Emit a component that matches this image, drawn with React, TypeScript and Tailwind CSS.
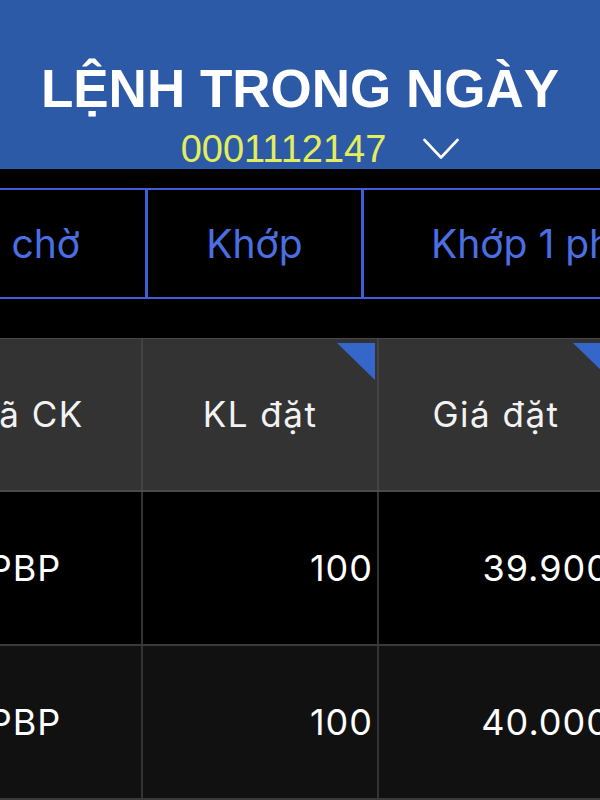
import React from 'react'

const tabText = 'font-["Inter",sans-serif] text-[39px] leading-none text-[#4b6fe3] whitespace-nowrap shrink-0'
const headText = 'font-["Inter",sans-serif] text-[35px] tracking-[1.5px] leading-none text-[#f2f2f2] whitespace-nowrap'
const cellText = 'font-["Inter",sans-serif] text-[36px] tracking-[1px] leading-none text-white whitespace-nowrap'

const rows = [
  { code: 'PBP', qty: '100', price: '39.900', bg: 'bg-black' },
  { code: 'PBP', qty: '100', price: '40.000', bg: 'bg-[#111111]' },
]

function Corner() {
  return (
    <svg className="absolute right-[2px] top-[4px]" width="38" height="37" viewBox="0 0 38 37">
      <polygon points="0,0 38,0 38,37" fill="#3566c9" />
    </svg>
  )
}

export default function App() {
  return (
    <div className="h-[800px] w-[600px] overflow-hidden bg-black">
      <header className="flex h-[169px] flex-col items-center bg-[#2d5aa7] pt-[62px]">
        <h1 className='font-["Liberation_Sans",Arial,sans-serif] text-[53px] font-bold leading-none text-white whitespace-nowrap'>
          LỆNH TRONG NGÀY
        </h1>
        <div className="mt-[15px] flex items-center gap-[37px] pl-[40px]">
          <span className='font-["Liberation_Sans",Arial,sans-serif] text-[38px] leading-none text-[#e4ee5c]'>
            0001112147
          </span>
          <svg width="36" height="22" viewBox="0 0 36 22" fill="none">
            <polyline points="1.5,2 18,19.5 34.5,2" stroke="white" strokeWidth="2.6" strokeLinecap="round" strokeLinejoin="round" />
          </svg>
        </div>
      </header>

      <nav className="mt-[19px] flex h-[111px] border-y-2 border-[#3f5ed8]">
        <div className="flex w-[145px] shrink-0 items-center justify-end pr-[65px]">
          <span className={tabText}>Đang chờ</span>
        </div>
        <div className="flex w-[216px] shrink-0 items-center justify-center border-l-[3px] border-[#3f5ed8]">
          <span className={tabText}>Khớp</span>
        </div>
        <div className="flex w-[380px] shrink-0 items-center border-l-[3px] border-[#3f5ed8] pl-[67px]">
          <span className={tabText}>Khớp 1 phần</span>
        </div>
      </nav>

      <section className="mt-[39px] ml-[-91px] w-[706px]">
        <div className="flex h-[154px] border-t border-b-2 border-t-[#484848] border-b-[#4a4a4a] bg-[#333333]">
          <div className="flex w-[234px] items-center justify-center border-r-2 border-[#434343]">
            <span className={headText}>Mã CK</span>
          </div>
          <div className="relative flex w-[236px] items-center justify-center border-r-2 border-[#434343]">
            <span className={headText}>KL đặt</span>
            <Corner />
          </div>
          <div className="relative flex w-[236px] items-center justify-center border-r-2 border-[#434343]">
            <span className={headText}>Giá đặt</span>
            <Corner />
          </div>
        </div>
        {rows.map((r, i) => (
          <div key={i} className={`flex h-[154px] border-b-2 border-[#3a3a3a] ${r.bg}`}>
            <div className="flex w-[234px] items-center justify-center border-r-2 border-[#333333]">
              <span className={cellText}>{r.code}</span>
            </div>
            <div className="flex w-[236px] items-center justify-end border-r-2 border-[#333333] pr-[4px]">
              <span className={cellText}>{r.qty}</span>
            </div>
            <div className="flex w-[236px] items-center justify-end border-r-2 border-[#333333] pr-[3px]">
              <span className={cellText}>{r.price}</span>
            </div>
          </div>
        ))}
      </section>
    </div>
  )
}
